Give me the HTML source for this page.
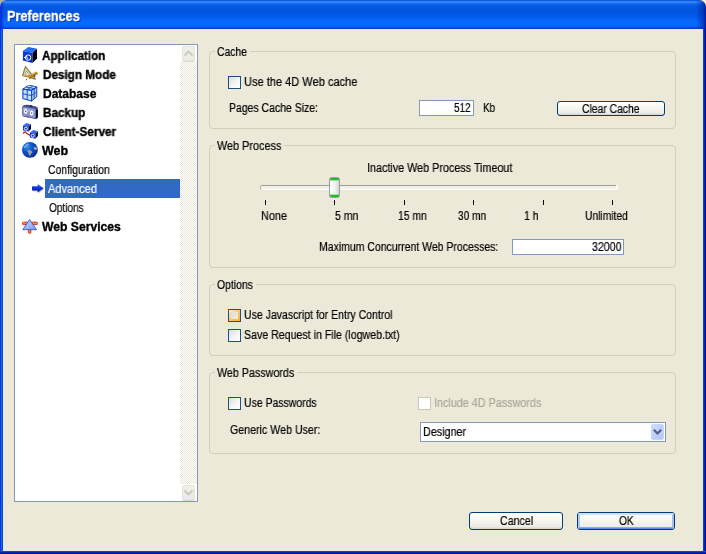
<!DOCTYPE html>
<html>
<head>
<meta charset="utf-8">
<title>Preferences</title>
<style>
html,body{margin:0;padding:0;}
body{width:706px;height:554px;overflow:hidden;background:#ECE9D8;position:relative;
  font-family:"Liberation Sans",sans-serif;font-size:12px;color:#000;}
*{box-sizing:border-box;}
.abs{position:absolute;}
#win{position:absolute;left:0;top:0;width:706px;height:554px;background:#ECE9D8;overflow:hidden;}
#cTL{left:0;top:0;width:8px;height:8px;background:#B2AD9A;}
#cTR{left:698px;top:0;width:8px;height:8px;background:#F3EDD2;}
#title{position:absolute;left:0;top:0;width:706px;height:29px;
  background:
   linear-gradient(90deg,#0831D9 0,#0831D9 1px,rgba(8,49,217,0) 4px,rgba(0,30,160,0) 696px,rgba(0,30,160,.55) 703px,#001A9A 706px),
   linear-gradient(180deg,#0842D2 0px,#1E6EF0 1px,#3E92FF 2px,#1E76F6 3px,#0C64EC 4px,#0458E2 6.5px,#0155DE 11px,#0258E6 15px,#0562F4 19px,#066AFF 22px,#0568FC 26px,#0450E0 27.5px,#0238B8 29px);
  border-radius:7px 7px 0 0;}
.cap{position:absolute;will-change:transform;-webkit-text-stroke:0.3px currentColor;font-weight:bold;font-size:14px;line-height:16px;height:16px;color:#fff;
  text-shadow:1px 1px 0 #0A2A8C;white-space:nowrap;transform-origin:0 0;}
#bl{left:0;top:29px;width:3px;height:525px;background:linear-gradient(90deg,#0831D9 0,#0831D9 1px,#166AEE 1px,#166AEE 2px,#0448DC 2px);}
#br{left:703px;top:29px;width:3px;height:525px;background:linear-gradient(90deg,#0A40E0 0,#0A40E0 1px,#0526B4 1px,#0526B4 2px,#00138C 2px);}
#bb{left:0;top:551px;width:706px;height:3px;background:linear-gradient(180deg,#0A40E8 0,#0A40E8 1px,#0526B4 1px,#0526B4 2px,#00138C 2px);}
.t{position:absolute;will-change:transform;-webkit-text-stroke:0.2px currentColor;white-space:nowrap;font-size:12px;line-height:14px;height:14px;transform-origin:0 0;}
.b{font-weight:bold;-webkit-text-stroke:0.35px currentColor;}
#list{left:14px;top:44px;width:184px;height:458px;background:#fff;border:1px solid #7F9DB9;}
#sb{left:180px;top:45px;width:17px;height:456px;
  background-color:#FFFFFF;
  background-image:linear-gradient(45deg,#EAE7D9 25%,transparent 25%,transparent 75%,#EAE7D9 75%),linear-gradient(45deg,#EAE7D9 25%,transparent 25%,transparent 75%,#EAE7D9 75%);
  background-size:2px 2px;background-position:0 0,1px 1px;}
.sbtn{position:absolute;left:0;width:17px;height:17px;background:#fff;}
.sbtn i{position:absolute;left:2px;top:1px;width:13px;height:15px;background:linear-gradient(180deg,#F0EFE8,#ECEBE3);border:1px solid #E6E5DB;border-radius:2px;box-shadow:0 1px 0 #DAD8CA;}
.sbtn svg{position:absolute;left:0;top:0;}
.gb{position:absolute;border:1px solid #D0D0BF;border-radius:4px;}
.gm{position:absolute;background:#ECE9D8;height:3px;}
.cb{position:absolute;width:13px;height:13px;border:1px solid #1C5180;
  background:linear-gradient(135deg,#DCDCD7 0%,#F3F3EF 50%,#FFFFFF 100%);}
.cb.hot{background:linear-gradient(135deg,#FFF0CF 0%,#FBC761 50%,#F8B330 100%);}
.cb.hot i{position:absolute;left:2px;top:2px;width:7px;height:7px;background:linear-gradient(135deg,#DEDED9,#EDEDE9);}
.inp{position:absolute;background:#fff;border:1px solid #7F9DB9;}
.btn{position:absolute;border:1px solid #003C74;border-radius:3px;
  background:linear-gradient(180deg,#FFFFFF 0%,#F6F5EF 50%,#ECEBE5 85%,#D6D0C5 100%);}
.tick{position:absolute;width:1px;height:5px;background:#000;top:200px;}
</style>
</head>
<body>
<div id="win">
  <div id="cTL" class="abs"></div>
  <div id="cTR" class="abs"></div>
  <div id="title"></div>
  <div id="bl" class="abs"></div>
  <div id="br" class="abs"></div>
  <div id="bb" class="abs"></div>

  <!-- sidebar list -->
  <div id="list" class="abs"></div>
  <div id="sb" class="abs">
    <div class="sbtn" style="top:0"><i></i><svg width="17" height="17" viewBox="0 0 17 17"><path d="M4.5 10.5 L8.5 6.5 L12.5 10.5" fill="none" stroke="#CAC9BD" stroke-width="1.9"/></svg></div>
    <div class="sbtn" style="bottom:0"><i></i><svg width="17" height="17" viewBox="0 0 17 17"><path d="M4.5 6.5 L8.5 10.5 L12.5 6.5" fill="none" stroke="#CAC9BD" stroke-width="1.9"/></svg></div>
  </div>

  <div class="abs" style="left:45px;top:179px;width:135px;height:19px;background:#316AC5;"></div>
  <!-- Application icon -->
  <svg class="abs" style="left:22px;top:47px;" width="16" height="17" viewBox="0 0 16 17">
    <defs>
      <linearGradient id="cbT" x1="0" y1="1" x2="1" y2="0"><stop offset="0" stop-color="#0C50E4"/><stop offset=".45" stop-color="#2A76F4"/><stop offset="1" stop-color="#0A48DE"/></linearGradient>
      <linearGradient id="cbF" x1="0" y1="0" x2="0" y2="1"><stop offset="0" stop-color="#0B40E0"/><stop offset="1" stop-color="#0628BE"/></linearGradient>
    </defs>
    <path d="M6.3 0 L15 1.8 L10.6 5.8 L0.9 4.1 Z" fill="url(#cbT)"/>
    <path d="M0.9 4.1 L10.6 5.8 L10.6 15.9 L0.9 13.5 Z" fill="url(#cbF)"/>
    <path d="M10.6 5.8 L15 1.8 L15 11.4 L10.6 15.9 Z" fill="#01030A"/>
    <circle cx="6.1" cy="10.6" r="2.7" fill="none" stroke="#fff" stroke-width="1"/>
    <path d="M2 10.5 L4.6 10.3 M4.4 8.8 L5.4 11.4 L6.4 12" fill="none" stroke="#E4EEFF" stroke-width="1"/>
  </svg>
  <!-- Design Mode icon -->
  <svg class="abs" style="left:22px;top:66px;" width="16" height="16" viewBox="0 0 16 16">
    <defs><linearGradient id="pen" x1="0" y1="0" x2="0.55" y2="0.84"><stop offset="0" stop-color="#F6CC70"/><stop offset=".5" stop-color="#DE9624"/><stop offset="1" stop-color="#8E5C10"/></linearGradient></defs>
    <path d="M3.4 0.6 L0.6 9.5 L13.5 13.2 Z" fill="#DDD8B2" stroke="#8F7F42" stroke-width="1.2" stroke-linejoin="round"/>
    <path d="M4.3 5.2 L3.3 8.7 L8.2 9.9 Z" fill="#FFFFFF" stroke="#9A8A50" stroke-width=".8" stroke-linejoin="round"/>
    <path d="M14.5 5.3 L16.1 7.8 L7.5 13.3 L5.9 10.8 Z" fill="url(#pen)"/>
    <path d="M5.9 10.8 L7.5 13.3 L3.4 14.3 Z" fill="#F0E8C4"/>
    <path d="M3.4 14.3 L4.4 12.9 L5.1 13.9 Z" fill="#2A3040"/>
    <circle cx="12.6" cy="10" r=".7" fill="#101010"/>
  </svg>
  <!-- Database icon -->
  <svg class="abs" style="left:22px;top:85px;" width="16" height="17" viewBox="0 0 16 17">
    <path d="M6.7 0 L14.8 2 L9.6 5.2 L0.9 4.1 Z" fill="#C9E8F0"/>
    <path d="M0.9 4.1 L9.6 5.2 L9.6 16 L0.9 13.5 Z" fill="#BFE6EE"/>
    <path d="M9.6 5.2 L14.8 2 L14.8 11.7 L9.6 16 Z" fill="#A4D2E4"/>
    <g fill="none" stroke="#1440D0" stroke-width=".9" stroke-linejoin="round">
      <path d="M6.7 0 L14.8 2 L9.6 5.2 L0.9 4.1 Z"/>
      <path d="M0.9 4.1 L9.6 5.2 L9.6 16 L0.9 13.5 Z" stroke-width="1.1"/>
      <path d="M9.6 5.2 L14.8 2 L14.8 11.7 L9.6 16" stroke="#0A2CB0"/>
      <path d="M3.8 2 L12.2 3.6 L12.2 13.8"/>
      <path d="M10.7 1 L5.2 4.6 L5.2 14.8"/>
      <path d="M0.9 8.8 L9.6 10.6 L14.8 6.8"/>
    </g>
  </svg>
  <!-- Backup icon -->
  <svg class="abs" style="left:22px;top:104px;" width="16" height="16" viewBox="0 0 16 16">
    <path d="M1.4 1.6 Q3.6 0.2 7.6 0.9 L14 2.6 Q15.9 3.2 15.9 4.8 L15.9 12.6 Q15.7 14.6 13.6 14.9 L2 12.8 Q0.2 12.4 0.2 10.6 L0.2 3.6 Q0.2 2.3 1.4 1.6 Z" fill="#454C8C"/>
    <path d="M13.6 6 L15.9 5.6 L15.9 12.8 Q15.7 14.6 13.6 14.9 Z" fill="#06070F"/>
    <rect x="8" y="1.4" width="2.2" height="1" fill="#050508" transform="rotate(12 9 2)"/>
    <path d="M0.8 3.8 Q1 2.8 2.4 3 L12.4 4.8 Q13.6 5.1 13.6 6.2 L13.6 13.2 Q13.6 14.1 12.4 13.9 L2 12 Q0.8 11.7 0.8 10.6 Z" fill="#8696D8"/>
    <path d="M1.4 4.2 Q5 3.4 7 6 Q9.6 5.4 12.8 7.4 L12.8 9 L1.4 7 Z" fill="#B4CAF6" opacity=".85"/>
    <ellipse cx="3.7" cy="7.3" rx="2.2" ry="3" fill="#fff" stroke="#6C7CC0" stroke-width=".7"/>
    <ellipse cx="9.7" cy="9" rx="2.3" ry="3" fill="#fff" stroke="#6C7CC0" stroke-width=".7"/>
    <circle cx="3.7" cy="7.3" r=".8" fill="#4A5498"/>
    <circle cx="9.7" cy="9" r=".8" fill="#4A5498"/>
    <path d="M4.8 11.4 L6.8 12.2 L6.6 13 L4.9 12.7 Z" fill="#DC1414"/>
  </svg>
  <!-- Client-Server icon -->
  <svg class="abs" style="left:22px;top:123px;" width="16" height="16" viewBox="0 0 16 16">
    <path d="M1 10.4 L3.2 8.8 L5 10.6 L8.2 12.4" fill="none" stroke="#C82424" stroke-width="1.3"/>
    <g>
      <path d="M4.4 0 L9 1.2 L6.8 3.4 L1 2.4 Z" fill="#2E6CF2"/>
      <path d="M1 2.4 L6.8 3.4 L6.6 8.6 L1 7.4 Z" fill="#0C3ADC"/>
      <path d="M6.8 3.4 L9 1.2 L9 6 L6.6 8.6 Z" fill="#02040C"/>
      <circle cx="3.9" cy="5.6" r="1.5" fill="none" stroke="#fff" stroke-width=".9"/>
    </g>
    <g transform="translate(6.9,7.1)">
      <path d="M4.4 0 L9 1.2 L6.8 3.4 L1 2.4 Z" fill="#2E6CF2"/>
      <path d="M1 2.4 L6.8 3.4 L6.6 8.6 L1 7.4 Z" fill="#0C3ADC"/>
      <path d="M6.8 3.4 L9 1.2 L9 6 L6.6 8.6 Z" fill="#02040C"/>
      <circle cx="3.9" cy="5.6" r="1.5" fill="none" stroke="#fff" stroke-width=".9"/>
    </g>
  </svg>
  <!-- Web icon -->
  <svg class="abs" style="left:22px;top:142px;" width="16" height="16" viewBox="0 0 16 16">
    <defs><radialGradient id="glb" cx=".33" cy=".3" r=".85"><stop offset="0" stop-color="#3E8CE8"/><stop offset=".4" stop-color="#0E52CC"/><stop offset=".8" stop-color="#0634A4"/><stop offset="1" stop-color="#04207C"/></radialGradient></defs>
    <circle cx="7.9" cy="7.9" r="7.9" fill="url(#glb)"/>
    <path d="M1.6 5.6 Q2.6 3 5.2 1.8 Q6.8 1.4 7.4 2.2 Q5.6 3 4.8 4.4 Q3.6 4.6 3.2 6 Q2.2 6.6 1.6 5.6 Z" fill="#8CC0EC" opacity=".7"/>
    <path d="M5.6 8 Q7.4 7.6 8.8 8.6 Q10.6 9.2 10.4 10.4 Q9.2 11.4 8.6 12.8 Q8 13.8 7.4 14 Q6.6 12.4 6.4 10.8 Q5.2 9.4 5.6 8 Z" fill="#AEA898" opacity=".9"/>
    <path d="M11.6 5.6 Q12.6 4.6 14.2 5 Q15.2 6.2 15 7.6 Q13.8 8.2 12.6 7.8 Q11.6 7 11.6 5.6 Z" fill="#C8A6A6" opacity=".9"/>
    <circle cx="11.7" cy="14.2" r=".55" fill="#000"/>
  </svg>
  <!-- selection arrow -->
  <svg class="abs" style="left:31px;top:183px;" width="14" height="11" viewBox="0 0 14 11">
    <defs><linearGradient id="arw" x1="0" y1="0" x2="0" y2="1"><stop offset="0" stop-color="#3A78F6"/><stop offset=".45" stop-color="#0A36DC"/><stop offset="1" stop-color="#00107C"/></linearGradient></defs>
    <path d="M2 4.2 L7.4 4.2 L7.4 2 L13.2 6.2 L7.4 10.4 L7.4 8.4 L2 8.4 Z" fill="#9A9AA8" opacity=".55"/>
    <path d="M1 3.2 L6.6 3.2 L6.6 1 L12.6 5.3 L6.6 9.6 L6.6 7.5 L1 7.5 Z" fill="url(#arw)"/>
  </svg>
  <!-- Web Services icon -->
  <svg class="abs" style="left:22px;top:219px;" width="16" height="16" viewBox="0 0 16 16">
    <defs><linearGradient id="wsT" x1="0" y1="0" x2="1" y2="1"><stop offset="0" stop-color="#C4D8FF"/><stop offset="1" stop-color="#7C9CEC"/></linearGradient></defs>
    <rect x=".4" y="3.2" width="15.2" height="2.4" rx="1.2" fill="#FF8A1E" stroke="#E01C1C" stroke-width=".9"/>
    <rect x="6.4" y="10" width="2.4" height="4.4" rx="1" fill="#FF8A1E" stroke="#E01C1C" stroke-width=".9"/>
    <path d="M7.6 0.6 L14.6 10.7 L0.8 10.7 Z" fill="url(#wsT)" stroke="#3C58C8" stroke-width=".9" stroke-linejoin="round"/>
  </svg>


  <!-- Cache group -->
  <div class="gb" style="left:209px;top:51px;width:467px;height:78px;"></div>
  <div class="gm" style="left:215px;top:50px;width:35px;"></div>
  <div class="cb" style="left:228px;top:76px;"></div>
  <div class="inp" style="left:419px;top:100px;width:55px;height:16px;"></div>
  <div class="btn" style="left:557px;top:101px;width:108px;height:15px;"></div>

  <!-- Web Process group -->
  <div class="gb" style="left:209px;top:145px;width:467px;height:123px;"></div>
  <div class="gm" style="left:215px;top:144px;width:69px;"></div>
  <div class="abs" style="left:260px;top:185px;width:358px;height:5px;background:linear-gradient(180deg,#9F9E9A 0,#9F9E9A 1px,#F1EFE5 1px,#F5F3EC 4px,#FFFFFF 4px);border-left:1px solid #B5B4AE;border-right:2px solid #fff;border-radius:2px;"></div>
  <div class="tick" style="left:265px;"></div>
  <div class="tick" style="left:334px;"></div>
  <div class="tick" style="left:404px;"></div>
  <div class="tick" style="left:473px;"></div>
  <div class="tick" style="left:543px;"></div>
  <div class="tick" style="left:612px;"></div>
  <svg class="abs" style="left:329px;top:177px;" width="11" height="21" viewBox="0 0 11 21">
    <defs><linearGradient id="thg" x1="0" x2="1" y1="0" y2="0"><stop offset="0" stop-color="#FFFFFF"/><stop offset=".55" stop-color="#F4F3EE"/><stop offset="1" stop-color="#D2D1C8"/></linearGradient></defs>
    <rect x=".5" y=".5" width="10" height="20" rx="2" fill="url(#thg)" stroke="#8CA0B2"/>
    <path d="M1 3.2 L1 2.2 Q1 .9 2.4 .9 L8.6 .9 Q10 .9 10 2.2 L10 3.2 Z" fill="#22BE22"/>
    <path d="M1 17.8 L1 18.8 Q1 20.1 2.4 20.1 L8.6 20.1 Q10 20.1 10 18.8 L10 17.8 Z" fill="#22BE22"/>
    <rect x="1" y="3.2" width="9" height=".5" fill="#9BDB9B"/>
    <rect x="1" y="17.3" width="9" height=".5" fill="#9BDB9B"/>
  </svg>
  <div class="inp" style="left:512px;top:239px;width:112px;height:16px;"></div>

  <!-- Options group -->
  <div class="gb" style="left:209px;top:284px;width:467px;height:72px;"></div>
  <div class="gm" style="left:215px;top:283px;width:41px;"></div>
  <div class="cb hot" style="left:228px;top:309px;"><i></i></div>
  <div class="cb" style="left:228px;top:329px;"></div>

  <!-- Web Passwords group -->
  <div class="gb" style="left:209px;top:372px;width:467px;height:82px;"></div>
  <div class="gm" style="left:215px;top:371px;width:82px;"></div>
  <div class="cb" style="left:228px;top:397px;"></div>
  <div class="cb" style="left:418px;top:397px;border-color:#CAC8BB;background:#fff;"></div>
  <div class="inp" style="left:420px;top:422px;width:246px;height:20px;"></div>
  <div class="abs" style="left:651px;top:424px;width:13px;height:16px;border-radius:2px;background:linear-gradient(135deg,#CEDBFE 0%,#C0D0FB 50%,#B2C5F8 100%);border:1px solid #C8D6FD;"></div>
  <svg class="abs" style="left:651px;top:424px;" width="13" height="16" viewBox="0 0 13 16"><path d="M2.8 5.8 L6.5 9.5 L10.2 5.8" fill="none" stroke="#4D6185" stroke-width="2.2"/></svg>

  <!-- buttons -->
  <div class="btn" style="left:469px;top:512px;width:94px;height:18px;"></div>
  <div class="btn" style="left:577px;top:512px;width:98px;height:18px;"><div style="position:absolute;left:0;top:0;right:0;bottom:0;border-radius:2px;border:2px solid;border-color:#CBE0FB #A4BFF2 #6787E6 #AFC8F5;"></div><div style="position:absolute;left:1px;right:1px;bottom:1px;height:1px;background:#8EA8EE;"></div></div>
  <div class="cap" id="cap" style="left:7.15px;top:8px;transform:scaleX(0.9076);">Preferences</div>
  <div class="t b" id="s1" style="left:42.00px;top:49px;transform:scaleX(0.9692);">Application</div>
  <div class="t b" id="s2" style="left:42.70px;top:68px;transform:scaleX(0.9760);">Design Mode</div>
  <div class="t b" id="s3" style="left:42.65px;top:87px;">Database</div>
  <div class="t b" id="s4" style="left:42.85px;top:106px;transform:scaleX(0.9769);">Backup</div>
  <div class="t b" id="s5" style="left:42.90px;top:125px;transform:scaleX(0.9788);">Client-Server</div>
  <div class="t b" id="s6" style="left:42.00px;top:144px;transform:scaleX(1.0400);">Web</div>
  <div class="t" id="s7" style="left:48.20px;top:163px;transform:scaleX(0.8648);">Configuration</div>
  <div class="t" id="s8" style="left:48.15px;top:182px;transform:scaleX(0.9172);color:#fff;">Advanced</div>
  <div class="t" id="s9" style="left:48.70px;top:201px;transform:scaleX(0.8395);">Options</div>
  <div class="t b" id="s10" style="left:42.00px;top:220px;transform:scaleX(1.0128);">Web Services</div>
  <div class="t" id="g1" style="left:217.30px;top:45px;transform:scaleX(0.8630);">Cache</div>
  <div class="t" id="c1" style="left:243.95px;top:75px;transform:scaleX(0.9203);">Use the 4D Web cache</div>
  <div class="t" id="c2" style="left:229.20px;top:101px;transform:scaleX(0.8722);">Pages Cache Size:</div>
  <div class="t" id="c3" style="left:453.95px;top:101px;transform:scaleX(0.8314);">512</div>
  <div class="t" id="c4" style="left:482.70px;top:101px;transform:scaleX(0.8178);">Kb</div>
  <div class="t" id="c5" style="left:581.90px;top:102px;transform:scaleX(0.8627);">Clear Cache</div>
  <div class="t" id="g2" style="left:216.55px;top:139px;transform:scaleX(0.9042);">Web Process</div>
  <div class="t" id="w1" style="left:367.35px;top:161px;transform:scaleX(0.8982);">Inactive Web Process Timeout</div>
  <div class="t" id="w2" style="left:260.55px;top:209px;transform:scaleX(0.9073);">None</div>
  <div class="t" id="w3" style="left:334.55px;top:209px;transform:scaleX(0.8769);">5 mn</div>
  <div class="t" id="w4" style="left:397.65px;top:209px;transform:scaleX(0.8607);">15 mn</div>
  <div class="t" id="w5" style="left:458.20px;top:209px;transform:scaleX(0.8428);">30 mn</div>
  <div class="t" id="w6" style="left:523.65px;top:209px;transform:scaleX(0.8760);">1 h</div>
  <div class="t" id="w7" style="left:585.30px;top:209px;transform:scaleX(0.8561);">Unlimited</div>
  <div class="t" id="w8" style="left:318.65px;top:240px;transform:scaleX(0.8739);">Maximum Concurrent Web Processes:</div>
  <div class="t" id="w9" style="left:592.00px;top:240px;transform:scaleX(0.8850);">32000</div>
  <div class="t" id="g3" style="left:216.90px;top:278px;transform:scaleX(0.8683);">Options</div>
  <div class="t" id="o1" style="left:244.30px;top:308px;transform:scaleX(0.8769);">Use Javascript for Entry Control</div>
  <div class="t" id="o2" style="left:243.90px;top:328px;transform:scaleX(0.8841);">Save Request in File (logweb.txt)</div>
  <div class="t" id="g4" style="left:216.95px;top:366px;transform:scaleX(0.8930);">Web Passwords</div>
  <div class="t" id="p1" style="left:244.10px;top:396px;transform:scaleX(0.8724);">Use Passwords</div>
  <div class="t" id="p2" style="left:433.80px;top:396px;transform:scaleX(0.8983);color:#ACA899;">Include 4D Passwords</div>
  <div class="t" id="p3" style="left:229.70px;top:423px;transform:scaleX(0.8871);">Generic Web User:</div>
  <div class="t" id="p4" style="left:422.50px;top:425px;transform:scaleX(0.8980);">Designer</div>
  <div class="t" id="b1" style="left:499.95px;top:514px;transform:scaleX(0.8865);">Cancel</div>
  <div class="t" id="b2" style="left:619.05px;top:514px;transform:scaleX(0.8474);">OK</div>
</div>
</body>
</html>
